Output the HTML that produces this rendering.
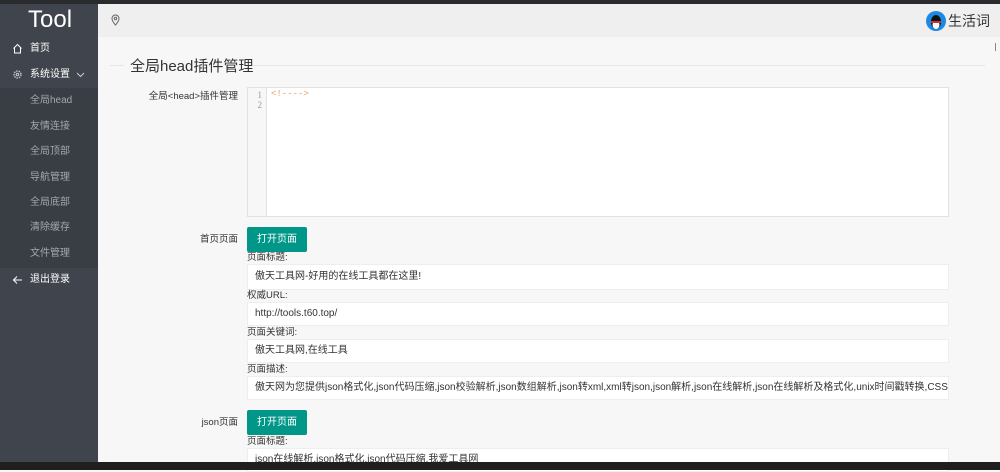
<!DOCTYPE html>
<html><head><meta charset="utf-8"><style>
*{margin:0;padding:0;box-sizing:border-box}
body{width:1000px;height:470px;overflow:hidden;background:#f7f7f7;font-family:"Liberation Sans","Noto Sans CJK SC",sans-serif;font-size:10px;color:#333;position:relative}
.abs{position:absolute}
.top{left:0;top:0;width:1000px;height:4px;background:#2a2b2e}
.side{left:0;top:4px;width:98px;height:458px;background:#40454d}
.sub{left:0;top:88px;width:98px;height:180px;background:#393e45}
.logo{left:28px;top:6px;color:#fff;font-size:24px}
.mi{color:#fff;font-size:10px;left:30px;line-height:12px}
.si{color:#a4a7ab;font-size:10px;left:30px;line-height:12px}
.hdr{left:98px;top:4px;width:902px;height:33px;background:#efefef}
.title{left:130px;top:55px;font-size:15px;color:#333}
.line{top:65px;height:1px;background:#e6e6e6}
.lbl{font-size:9.5px;color:#333;text-align:right;width:140px;left:98px;line-height:12px}
.ed{left:247px;top:87px;width:702px;height:130px;background:#fff;border:1px solid #e2e2e2}
.gut{left:248px;top:88px;width:19px;height:128px;background:#f7f7f7;border-right:1px solid #e2e2e2;color:#999;font-family:"Liberation Serif",serif;font-size:9px;text-align:right;padding-right:4px;line-height:10px;padding-top:2px}
.btn{left:247px;width:60px;height:25px;background:#009688;color:#fff;font-size:10px;text-align:center;line-height:25px;border-radius:2px}
.fl{left:247px;font-size:9.5px;color:#333;line-height:12px}
.in{left:247px;width:702px;background:#fff;border:1px solid #eee;font-size:10px;padding-left:7px;white-space:nowrap;overflow:hidden}
.bot{left:0;top:462px;width:1000px;height:8px;background:#1f1f1f}
</style></head><body>
<div class="abs top"></div>
<div class="abs side"></div>
<div class="abs sub"></div>
<div class="abs logo">Tool</div>
<svg class="abs" style="left:12px;top:43px" width="11" height="11" viewBox="0 0 11 11"><path d="M1.5 5.5L5.5 1.5L9.5 5.5M2.5 4.5V10H8.5V4.5" fill="none" stroke="#fff" stroke-width="1"/></svg>
<div class="abs mi" style="top:43px">首页</div>
<svg class="abs" style="left:12px;top:69px" width="11" height="11" viewBox="0 0 11 11"><circle cx="5.5" cy="5.5" r="3.5" fill="none" stroke="#ccc" stroke-width="1.3" stroke-dasharray="1.5 1"/><circle cx="5.5" cy="5.5" r="1.3" fill="none" stroke="#ccc"/></svg>
<div class="abs mi" style="top:69px">系统设置</div>
<svg class="abs" style="left:76px;top:72px" width="9" height="6" viewBox="0 0 9 6"><path d="M1 1L4.5 4.5L8 1" fill="none" stroke="#ccc"/></svg>
<div class="abs si" style="top:95px">全局head</div>
<div class="abs si" style="top:121px">友情连接</div>
<div class="abs si" style="top:146px">全局顶部</div>
<div class="abs si" style="top:172px">导航管理</div>
<div class="abs si" style="top:197px">全局底部</div>
<div class="abs si" style="top:222px">清除缓存</div>
<div class="abs si" style="top:248px">文件管理</div>
<svg class="abs" style="left:12px;top:275px" width="11" height="10" viewBox="0 0 11 10"><path d="M10 5H1.5M5 1.5L1.5 5L5 8.5" fill="none" stroke="#fff"/></svg>
<div class="abs mi" style="top:274px">退出登录</div>
<div class="abs hdr"></div>
<svg class="abs" style="left:111px;top:14px" width="9" height="12" viewBox="0 0 9 12"><path d="M4.5 11C4.5 11 1 7 1 4.5A3.5 3.5 0 0 1 8 4.5C8 7 4.5 11 4.5 11Z" fill="none" stroke="#666"/><circle cx="4.5" cy="4.5" r="1.2" fill="none" stroke="#666"/></svg>
<svg class="abs" style="left:926px;top:11px" width="20" height="20" viewBox="0 0 20 20"><circle cx="10" cy="10" r="10" fill="#1e88e5"/><ellipse cx="10" cy="11" rx="5" ry="7" fill="#111"/><ellipse cx="10" cy="14" rx="3.5" ry="4" fill="#fff"/><rect x="5" y="10" width="10" height="2" fill="#d32f2f"/></svg>
<div class="abs" style="left:948px;top:11px;font-size:14px;color:#333">生活词</div>
<div class="abs" style="left:995px;top:43px;width:1px;height:8px;background:#888"></div>
<div class="abs line" style="left:110px;width:14px"></div>
<div class="abs line" style="left:244px;width:741px"></div>
<div class="abs title">全局head插件管理</div>
<div class="abs lbl" style="top:91px">全局&lt;head&gt;插件管理</div>
<div class="abs ed"></div>
<div class="abs gut">1<br>2</div>
<div class="abs" style="left:271px;top:89px;color:#e8a15c;font-size:9px;font-family:'Liberation Mono',monospace">&lt;!----&gt;</div>
<div class="abs lbl" style="top:234px">首页页面</div>
<div class="abs btn" style="top:227px">打开页面</div>
<div class="abs fl" style="top:252px">页面标题:</div>
<div class="abs in" style="top:264px;height:26px;line-height:24px">傲天工具网-好用的在线工具都在这里!</div>
<div class="abs fl" style="top:290px">权威URL:</div>
<div class="abs in" style="top:302px;height:24px;line-height:22px">http://tools.t60.top/</div>
<div class="abs fl" style="top:327px">页面关键词:</div>
<div class="abs in" style="top:339px;height:24px;line-height:22px">傲天工具网,在线工具</div>
<div class="abs fl" style="top:364px">页面描述:</div>
<div class="abs in" style="top:376px;height:24px;line-height:22px">傲天网为您提供json格式化,json代码压缩,json校验解析,json数组解析,json转xml,xml转json,json解析,json在线解析,json在线解析及格式化,unix时间戳转换,CSS美化压缩,json美化</div>
<div class="abs lbl" style="top:417px">json页面</div>
<div class="abs btn" style="top:410px">打开页面</div>
<div class="abs fl" style="top:436px">页面标题:</div>
<div class="abs in" style="top:448px;height:24px;line-height:22px">json在线解析,json格式化,json代码压缩,我爱工具网</div>
<div class="abs bot"></div>
</body></html>
